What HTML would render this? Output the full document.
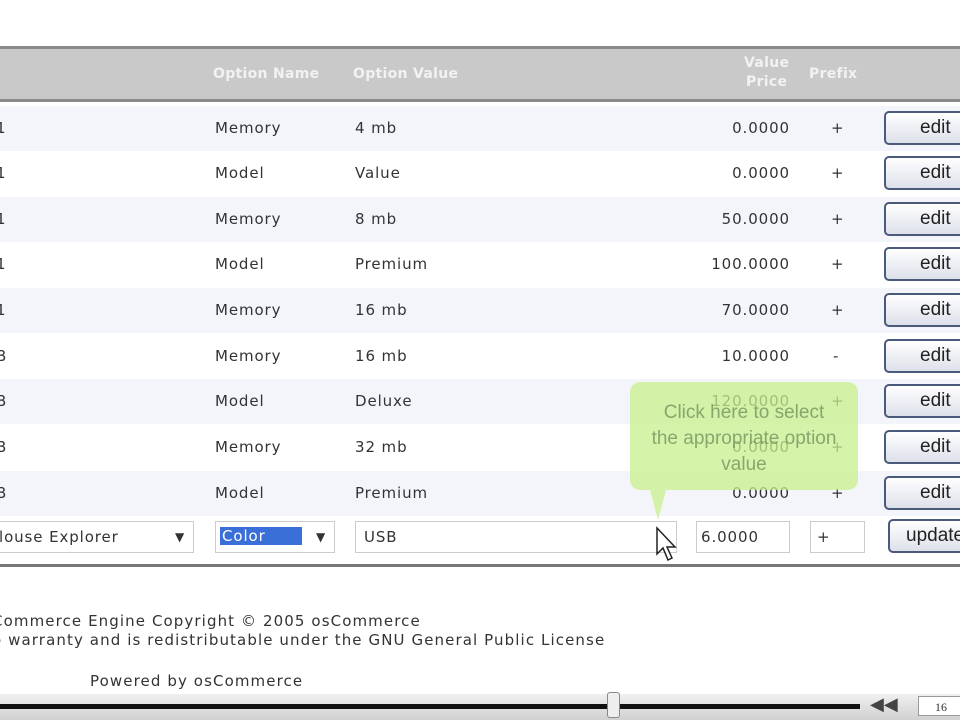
<!DOCTYPE html>
<html><head><meta charset="utf-8"><style>
*{margin:0;padding:0;box-sizing:border-box}
body{width:960px;height:720px;overflow:hidden;background:#fff;font-family:"DejaVu Sans","Liberation Sans",sans-serif;font-size:15px;letter-spacing:0.9px;color:#333;position:relative}
.a{position:absolute;white-space:nowrap}
.hdr{position:absolute;left:0;top:46px;width:960px;height:56px;background:#c9c9c9;border-top:3px solid #8a8a8a;border-bottom:3px solid #8a8a8a}
.hdr span{position:absolute;color:#f2f2f2;font-weight:bold;font-size:14px;letter-spacing:0.3px}
.row{position:absolute;left:0;width:960px;height:45px}
.row span{position:absolute;top:13px}
.btn{position:absolute;left:884px;width:90px;height:34px;top:5px;border:2px solid #4a5a7a;border-radius:5px;background:linear-gradient(#fff,#dde0ea);font-family:"Liberation Sans",sans-serif;font-size:19px;letter-spacing:0;padding-left:34px;padding-top:4px;color:#222}
.inp{position:absolute;top:521px;height:32px;border:1px solid #ccc;background:#fff}
</style></head><body>
<div class="hdr">
<span style="left:213px;top:17px">Option Name</span>
<span style="left:353px;top:17px">Option Value</span>
<span style="left:744px;top:6px">Value</span>
<span style="left:746px;top:25px">Price</span>
<span style="left:809px;top:17px">Prefix</span>
</div>
<div class="row" style="top:106px;background:#f3f5fb"><span style="left:-4px">1</span><span style="left:215px">Memory</span><span style="left:355px">4 mb</span><span style="left:690px;width:100px;text-align:right">0.0000</span><span style="left:831px">+</span><div class="btn">edit</div></div>
<div class="row" style="top:151px;background:#fff"><span style="left:-4px">1</span><span style="left:215px">Model</span><span style="left:355px">Value</span><span style="left:690px;width:100px;text-align:right">0.0000</span><span style="left:831px">+</span><div class="btn">edit</div></div>
<div class="row" style="top:197px;background:#f3f5fb"><span style="left:-4px">1</span><span style="left:215px">Memory</span><span style="left:355px">8 mb</span><span style="left:670px;width:120px;text-align:right">50.0000</span><span style="left:831px">+</span><div class="btn">edit</div></div>
<div class="row" style="top:242px;background:#fff"><span style="left:-4px">1</span><span style="left:215px">Model</span><span style="left:355px">Premium</span><span style="left:670px;width:120px;text-align:right">100.0000</span><span style="left:831px">+</span><div class="btn">edit</div></div>
<div class="row" style="top:288px;background:#f3f5fb"><span style="left:-4px">1</span><span style="left:215px">Memory</span><span style="left:355px">16 mb</span><span style="left:670px;width:120px;text-align:right">70.0000</span><span style="left:831px">+</span><div class="btn">edit</div></div>
<div class="row" style="top:334px;background:#fff"><span style="left:-4px">B</span><span style="left:215px">Memory</span><span style="left:355px">16 mb</span><span style="left:670px;width:120px;text-align:right">10.0000</span><span style="left:833px">-</span><div class="btn">edit</div></div>
<div class="row" style="top:379px;background:#f3f5fb"><span style="left:-4px">B</span><span style="left:215px">Model</span><span style="left:355px">Deluxe</span><span style="left:670px;width:120px;text-align:right">120.0000</span><span style="left:831px">+</span><div class="btn">edit</div></div>
<div class="row" style="top:425px;background:#fff"><span style="left:-4px">B</span><span style="left:215px">Memory</span><span style="left:355px">32 mb</span><span style="left:690px;width:100px;text-align:right">0.0000</span><span style="left:831px">+</span><div class="btn">edit</div></div>
<div class="row" style="top:471px;background:#f3f5fb"><span style="left:-4px">B</span><span style="left:215px">Model</span><span style="left:355px">Premium</span><span style="left:690px;width:100px;text-align:right">0.0000</span><span style="left:831px">+</span><div class="btn">edit</div></div>
<div class="inp" style="left:-2px;width:196px"><span class="a" style="left:0;top:6px">louse Explorer</span><span class="a" style="left:176px;top:8px;font-size:12px">▼</span></div>
<div class="inp" style="left:215px;width:120px"><span class="a" style="left:4px;top:5px;background:#3a6fd8;color:#fff;padding:0 2px;width:82px">Color</span><span class="a" style="left:100px;top:8px;font-size:12px">▼</span></div>
<div class="inp" style="left:355px;width:322px"><span class="a" style="left:8px;top:6px">USB</span></div>
<div class="inp" style="left:696px;width:94px"><span class="a" style="left:4px;top:6px">6.0000</span></div>
<div class="inp" style="left:810px;width:55px"><span class="a" style="left:6px;top:6px">+</span></div>
<div class="btn" style="top:519px;left:888px;padding-left:16px">update</div>
<div class="a" style="left:630px;top:382px;width:228px;height:108px;background:rgba(200,240,140,0.75);border-radius:10px;color:rgba(110,140,90,0.75);font-family:'Liberation Sans',sans-serif;font-size:19px;letter-spacing:0;text-align:center;line-height:26px;padding:18px 20px 0;white-space:normal">Click here to select the appropriate option value</div>
<div class="a" style="left:650px;top:490px;width:0;height:0;border-left:8px solid transparent;border-right:8px solid transparent;border-top:30px solid rgba(200,240,140,0.75)"></div>
<svg class="a" style="left:655px;top:526px" width="24" height="40" viewBox="0 0 24 40"><path d="M2 2 L2 28 L8 22 L13 34 L17 32 L12 21 L20 21 Z" fill="#fff" stroke="#222" stroke-width="1.5"/></svg>
<div class="a" style="left:0;top:564px;width:960px;height:3px;background:#777"></div>
<div class="a" style="left:-8px;top:612px;font-size:15px;letter-spacing:1.1px">Commerce Engine Copyright © 2005 osCommerce</div>
<div class="a" style="left:-8px;top:631px;font-size:15px;letter-spacing:1.1px">o warranty and is redistributable under the GNU General Public License</div>
<div class="a" style="left:90px;top:672px;font-size:15px;letter-spacing:1.1px">Powered by osCommerce</div>
<div class="a" style="left:0;top:694px;width:960px;height:26px;background:linear-gradient(#f0f0f0,#d0d0d0)"></div>
<div class="a" style="left:0;top:704px;width:860px;height:5px;background:#111"></div>
<div class="a" style="left:607px;top:692px;width:13px;height:26px;background:#eee;border:1px solid #888;border-radius:3px"></div>
<div class="a" style="left:870px;top:694px;font-size:18px;color:#444;letter-spacing:0">◀◀</div>
<div class="a" style="left:918px;top:696px;width:50px;height:20px;background:#fff;border:1px solid #999;font-family:'Liberation Serif',serif;font-size:12px;letter-spacing:0;padding:3px 0 0 16px">16</div>
</body></html>
